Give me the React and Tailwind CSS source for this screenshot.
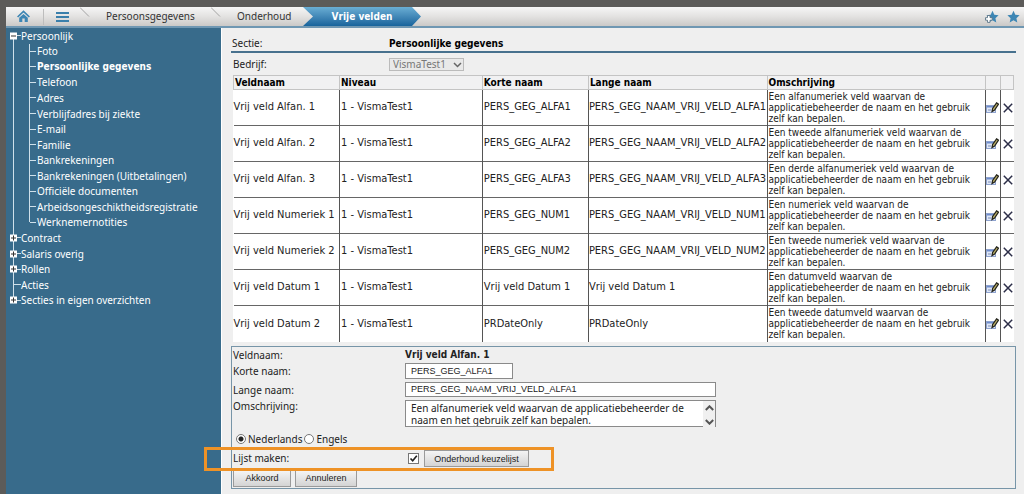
import React, { useState } from 'react'

const tree = [
  { label: 'Persoonlijk', toggle: 'open' },
  { label: 'Foto', child: true },
  { label: 'Persoonlijke gegevens', child: true, active: true },
  { label: 'Telefoon', child: true },
  { label: 'Adres', child: true },
  { label: 'Verblijfadres bij ziekte', child: true },
  { label: 'E-mail', child: true },
  { label: 'Familie', child: true },
  { label: 'Bankrekeningen', child: true },
  { label: 'Bankrekeningen (Uitbetalingen)', child: true },
  { label: 'Officiële documenten', child: true },
  { label: 'Arbeidsongeschiktheidsregistratie', child: true },
  { label: 'Werknemernotities', child: true, last: true },
  { label: 'Contract', toggle: 'closed' },
  { label: 'Salaris overig', toggle: 'closed' },
  { label: 'Rollen', toggle: 'closed' },
  { label: 'Acties' },
  { label: 'Secties in eigen overzichten', toggle: 'closed', last: true },
]

const fields = [
  { name: 'Vrij veld Alfan. 1', short: 'PERS_GEG_ALFA1', long: 'PERS_GEG_NAAM_VRIJ_VELD_ALFA1', desc: 'Een alfanumeriek veld waarvan de' },
  { name: 'Vrij veld Alfan. 2', short: 'PERS_GEG_ALFA2', long: 'PERS_GEG_NAAM_VRIJ_VELD_ALFA2', desc: 'Een tweede alfanumeriek veld waarvan de' },
  { name: 'Vrij veld Alfan. 3', short: 'PERS_GEG_ALFA3', long: 'PERS_GEG_NAAM_VRIJ_VELD_ALFA3', desc: 'Een derde alfanumeriek veld waarvan de' },
  { name: 'Vrij veld Numeriek 1', short: 'PERS_GEG_NUM1', long: 'PERS_GEG_NAAM_VRIJ_VELD_NUM1', desc: 'Een numeriek veld waarvan de' },
  { name: 'Vrij veld Numeriek 2', short: 'PERS_GEG_NUM2', long: 'PERS_GEG_NAAM_VRIJ_VELD_NUM2', desc: 'Een tweede numeriek veld waarvan de' },
  { name: 'Vrij veld Datum 1', short: 'Vrij veld Datum 1', long: 'Vrij veld Datum 1', desc: 'Een datumveld waarvan de' },
  { name: 'Vrij veld Datum 2', short: 'PRDateOnly', long: 'PRDateOnly', desc: 'Een tweede datumveld waarvan de' },
]

const bold = "font-['DejaVu_Sans_Condensed','DejaVu_Sans',sans-serif] font-bold"
const inputStyle = 'block border border-[#8a8a8a] bg-white px-[5px] text-[#222]'
const buttonStyle = "h-[17px] border border-[#9a9a9a] bg-linear-to-b from-[#f4f4f4] to-[#d4d4d4] text-center font-['Liberation_Sans',Arial,sans-serif] text-[9px] leading-[14px] text-[#222]"

function Star({ plus }) {
  return (
    <svg width="14" height="14" viewBox="0 0 14 14">
      <path d="M7.5 .8l1.8 4 4.3.4-3.2 3 .9 4.4-3.8-2.3-3.8 2.3.9-4.4-3.2-3 4.3-.4z" fill="#3d86b4" />
      {plus && <path d="M2.500 5.500h2.500v2.200h2.200v2.500H5v2.200H2.500v-2.200H.5v-2.500h2z" fill="#fff" stroke="#5b7486" strokeWidth=".9" />}
    </svg>
  )
}

function Slash() {
  return (
    <svg className="shrink-0" width="10" height="20" viewBox="0 0 10 20">
      <path d="M0 .5l9 9" stroke="#a3a3a3" fill="none" />
    </svg>
  )
}

function TopBar() {
  return (
    <header className="flex h-[21px] items-center border-b-2 border-[#6f97b2] bg-linear-to-b from-[#f6f6f6] via-[#e3e2e1] to-[#cbc9c7] text-[#333]">
      <button aria-label="Home" className="ml-[11px]">
        <svg className="block" width="13" height="13" viewBox="0 0 13 13">
          <path d="M.6 7L6.500 1.500 12.400 7" stroke="#3d86b4" strokeWidth="1.700" fill="none" />
          <path d="M2.200 7.800L6.500 3.900l4.300 3.900V12H7.700V8.500H5.300V12H2.200z" fill="#3d86b4" />
        </svg>
      </button>
      <span className="ml-[13px] h-4 w-px bg-[#bdbdbd]" />
      <button aria-label="Menu" className="ml-3 flex flex-col gap-0.5">
        <span className="h-0.5 w-[13px] bg-[#3a7fab]" />
        <span className="h-0.5 w-[13px] bg-[#3a7fab]" />
        <span className="h-0.5 w-[13px] bg-[#3a7fab]" />
      </button>
      <nav className="ml-[11px] flex h-full items-center">
        <Slash />
        <a href="#" className="w-[121px] pl-4">Persoonsgegevens</a>
        <Slash />
        <a href="#" className="w-[82px] pl-4">Onderhoud</a>
        <a href="#" className={`${bold} flex h-full w-[118px] items-center justify-center bg-linear-to-b from-[#6aaed4] to-[#17649c] text-white [clip-path:polygon(0_0,109px_0,100%_50%,109px_100%,0_100%,10px_50%)]`}>
          Vrije velden
        </a>
      </nav>
      <div className="ml-auto flex gap-[7px] pr-1">
        <button aria-label="Favoriet toevoegen"><Star plus /></button>
        <button aria-label="Favorieten"><Star /></button>
      </div>
    </header>
  )
}

function Toggle({ open }) {
  return (
    <button aria-label={open ? 'Inklappen' : 'Uitklappen'} className="absolute top-1/2 left-1 block size-[7px] -translate-y-1/2 bg-white">
      <svg className="block" width="7" height="7" viewBox="0 0 7 7">
        <path d={open ? 'M1 3.500h5' : 'M1 3.500h5M3.500 1v5'} stroke="#333" strokeWidth="1" />
      </svg>
    </button>
  )
}

function TreeItem({ item, first }) {
  let trunk = 'h-full'
  if (first) trunk = 'h-1/2 self-end'
  else if (item.last && !item.child) trunk = 'h-1/2 self-start'

  return (
    <li className="relative flex items-center">
      <span className={`ml-[7px] w-px shrink-0 bg-[#cfe0ea] ${trunk}`} />
      {item.child ? (
        <>
          <span className={`ml-[15px] w-px shrink-0 self-start bg-[#cfe0ea] ${item.last ? 'h-1/2' : 'h-full'}`} />
          <span className="mr-px h-px w-1.5 shrink-0 bg-[#cfe0ea]" />
        </>
      ) : (
        <span className="h-px w-[7px] shrink-0 bg-[#cfe0ea]" />
      )}
      {item.toggle && <Toggle open={item.toggle === 'open'} />}
      <a href="#" className={`whitespace-nowrap ${item.active ? bold : ''}`}>{item.label}</a>
    </li>
  )
}

function EditIcon() {
  return (
    <svg className="block" width="13" height="12" viewBox="0 0 13 12">
      <rect x=".5" y="3.500" width="9" height="7" fill="#dfe7f6" stroke="#8fa3cf" />
      <path d="M1 4h8v1.500H1z" fill="#6f8dcc" />
      <path d="M2 8h3" stroke="#7c8db8" />
      <path d="M6 9.500l.6-3L10.600.8l1.900 1.400L8.600 8z" fill="#b9ae68" stroke="#23231c" strokeWidth="1.200" />
    </svg>
  )
}

function FieldTable() {
  return (
    <table className="w-full table-fixed border-collapse bg-white text-left">
      <colgroup>
        <col className="w-[13.6%]" />
        <col className="w-[18.3%]" />
        <col className="w-[13.6%]" />
        <col className="w-[22.9%]" />
        <col />
        <col className="w-[15px]" />
        <col className="w-[13px]" />
      </colgroup>
      <thead className="bg-[#f1f1f2] leading-3">
        <tr className="h-[14px]">
          {['Veldnaam', 'Niveau', 'Korte naam', 'Lange naam', 'Omschrijving', '', ''].map((h, i) => (
            <th key={i} className={`${bold} border border-[#c4c4c4] p-0 pl-px text-black`}>{h}</th>
          ))}
        </tr>
      </thead>
      <tbody className="font-['DejaVu_Sans_Condensed','DejaVu_Sans',sans-serif] text-[11px] whitespace-nowrap">
        {fields.map(f => (
          <tr key={f.name} className="h-9 border-b border-[#666] last:border-b-0">
            <td className="border-r border-[#555] p-0">{f.name}</td>
            <td className="border-r border-[#555] p-0 pl-px">1 - VismaTest1</td>
            <td className="border-r border-[#555] p-0 pl-px">{f.short}</td>
            <td className="border-r border-[#555] p-0">{f.long}</td>
            <td className="border-r border-[#555] p-0 pl-px text-[10px] leading-[11px]">
              {f.desc}<br />applicatiebeheerder de naam en het gebruik<br />zelf kan bepalen.
            </td>
            <td className="border-r border-[#555] p-0">
              <button aria-label={`${f.name} bewerken`} className="block"><EditIcon /></button>
            </td>
            <td className="p-0">
              <button aria-label={`${f.name} verwijderen`} className="block pl-0.5">
                <svg className="block" width="10" height="10" viewBox="0 0 10 10">
                  <path d="M.8 .8l8.400 8.400M9.200 .8L.8 9.200" stroke="#2c2e48" strokeWidth="1.500" />
                </svg>
              </button>
            </td>
          </tr>
        ))}
      </tbody>
    </table>
  )
}

function FieldForm() {
  const [lang, setLang] = useState('nl')
  const [makeList, setMakeList] = useState(true)

  return (
    <form className="relative mt-1 border border-[#7795a8] px-px" onSubmit={e => e.preventDefault()}>
      <div className="grid grid-cols-[172px_1fr]">
        <span className="h-4 leading-4">Veldnaam:</span>
        <span className={`${bold} leading-4`}>Vrij veld Alfan. 1</span>

        <label htmlFor="short" className="h-[19px] leading-4">Korte naam:</label>
        <input id="short" defaultValue="PERS_GEG_ALFA1" className={`${inputStyle} h-4 w-[108px] px-0.5 font-['Liberation_Sans',Arial,sans-serif] text-[9px]`} />

        <label htmlFor="long" className="h-[18px] leading-4">Lange naam:</label>
        <input id="long" defaultValue="PERS_GEG_NAAM_VRIJ_VELD_ALFA1" className={`${inputStyle} h-[15px] w-full max-w-[311px] px-0.5 font-['Liberation_Sans',Arial,sans-serif] text-[9px]`} />

        <label htmlFor="desc" className="h-[30px] leading-3">Omschrijving:</label>
        <div className="relative max-w-[311px]">
          <textarea
            id="desc"
            defaultValue="Een alfanumeriek veld waarvan de applicatiebeheerder de naam en het gebruik zelf kan bepalen."
            className={`${inputStyle} h-[27px] w-full resize-none overflow-hidden py-px pr-[22px] leading-3`}
          />
          <div className="absolute inset-y-px right-px flex w-3 flex-col items-center justify-between bg-[#f0f0f0] py-1">
            <svg width="9" height="6" viewBox="0 0 9 6"><path d="M.8 5l3.700-3.700L8.200 5" stroke="#555" strokeWidth="2" fill="none" /></svg>
            <svg width="9" height="6" viewBox="0 0 9 6"><path d="M.8 1l3.700 3.700L8.200 1" stroke="#555" strokeWidth="2" fill="none" /></svg>
          </div>
        </div>
      </div>

      <div className="flex h-[19px] items-center">
        {[['nl', 'Nederlands'], ['en', 'Engels']].map(([key, label]) => (
          <label key={key} className="mr-0.5 flex items-center gap-0.5 first:ml-[3px]">
            <input
              type="radio"
              name="lang"
              checked={lang === key}
              onChange={() => setLang(key)}
              className="size-[10px] appearance-none rounded-full border border-[#777] bg-white checked:bg-[radial-gradient(circle,#222_0_2px,#fff_3px)]"
            />
            {label}
          </label>
        ))}
      </div>

      <div className="flex h-5 items-center">
        <label htmlFor="makeList" className="w-[175px]">Lijst maken:</label>
        <span className="relative block size-[11px]">
          <input
            id="makeList"
            type="checkbox"
            checked={makeList}
            onChange={e => setMakeList(e.target.checked)}
            className="block size-[11px] appearance-none border border-[#777] bg-white"
          />
          {makeList && (
            <svg className="pointer-events-none absolute inset-0" width="11" height="11" viewBox="0 0 11 11">
              <path d="M2.500 5.500l2.200 2.300L8.800 2.800" stroke="#222" strokeWidth="1.600" fill="none" />
            </svg>
          )}
        </span>
        <button type="button" className={`${buttonStyle} ml-[5px] w-[105px]`}>Onderhoud keuzelijst</button>
      </div>

      <div className="mt-px flex gap-1 pb-px">
        <button type="submit" className={`${buttonStyle} w-[58px]`}>Akkoord</button>
        <button type="button" className={`${buttonStyle} w-[62px]`}>Annuleren</button>
      </div>

      <div className="pointer-events-none absolute bottom-[17px] -left-[28px] h-6 w-[350px] border-3 border-[#ee9226]" />
    </form>
  )
}

export default function App() {
  return (
    <div className="flex min-h-screen flex-col bg-[#5c5b59] pt-[7px] pl-1.5 font-['Noto_Sans',sans-serif] text-[10px] text-[#222]">
      <TopBar />
      <div className="flex flex-1">
        <aside className="w-[215px] shrink-0 bg-[#386b8b] text-white">
          <ul className="grid h-[280px] auto-rows-fr leading-3">
            {tree.map((item, i) => <TreeItem key={item.label} item={item} first={i === 0} />)}
          </ul>
        </aside>
        <main className="min-w-0 flex-1 border-l border-white bg-[#efefef] pt-2 pr-2 pl-[9px]">
          <div className="flex h-[17px] items-center border-b-2 border-[#47718e]">
            <span className="w-[158px] pl-px">Sectie:</span>
            <span className={`${bold} text-black`}>Persoonlijke gegevens</span>
          </div>
          <div className="flex h-[22px] items-center pl-0.5">
            <label htmlFor="company" className="w-[156px]">Bedrijf:</label>
            <span className="relative">
              <select id="company" disabled className="block h-[13px] w-[75px] appearance-none border border-[#bbb] bg-[#e9e9e9] pl-[3px] text-[10px] leading-[11px] text-[#777] opacity-100">
                <option>VismaTest1</option>
              </select>
              <svg className="pointer-events-none absolute top-1 right-0.5" width="9" height="6" viewBox="0 0 9 6">
                <path d="M1 1l3.500 3.500L8 1" stroke="#666" strokeWidth="1.500" fill="none" />
              </svg>
            </span>
          </div>
          <div className="pr-0.5 pl-0.5">
            <FieldTable />
          </div>
          <FieldForm />
        </main>
      </div>
    </div>
  )
}
